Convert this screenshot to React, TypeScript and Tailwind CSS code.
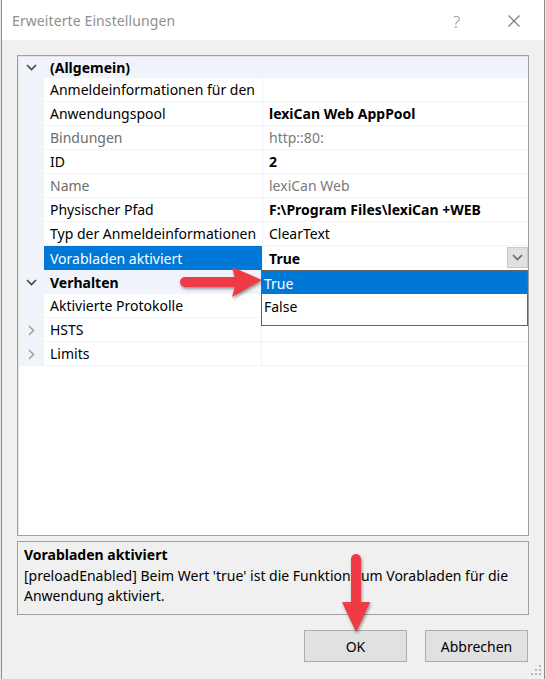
import React from 'react'

type Row =
  | { kind: 'cat'; label: string }
  | { kind: 'group'; label: string }
  | { kind: 'prop'; name: string; value: string; bold?: boolean; disabled?: boolean; selected?: boolean }

const rows: Row[] = [
  { kind: 'cat', label: '(Allgemein)' },
  { kind: 'prop', name: 'Anmeldeinformationen für den', value: '' },
  { kind: 'prop', name: 'Anwendungspool', value: 'lexiCan Web AppPool', bold: true },
  { kind: 'prop', name: 'Bindungen', value: 'http::80:', disabled: true },
  { kind: 'prop', name: 'ID', value: '2', bold: true },
  { kind: 'prop', name: 'Name', value: 'lexiCan Web', disabled: true },
  { kind: 'prop', name: 'Physischer Pfad', value: 'F:\\Program Files\\lexiCan +WEB', bold: true },
  { kind: 'prop', name: 'Typ der Anmeldeinformationen', value: 'ClearText' },
  { kind: 'prop', name: 'Vorabladen aktiviert', value: 'True', bold: true, selected: true },
  { kind: 'cat', label: 'Verhalten' },
  { kind: 'prop', name: 'Aktivierte Protokolle', value: '' },
  { kind: 'group', label: 'HSTS' },
  { kind: 'group', label: 'Limits' },
]

function ChevronDown({ color = '#555' }: { color?: string }) {
  return (
    <svg width="11" height="7" viewBox="0 0 11 7">
      <path d="M1 1 L5.5 5.5 L10 1" fill="none" stroke={color} strokeWidth="1.6" />
    </svg>
  )
}

function ChevronRight() {
  return (
    <svg width="7" height="11" viewBox="0 0 7 11">
      <path d="M1 1 L5.5 5.5 L1 10" fill="none" stroke="#9a9a9a" strokeWidth="1.4" />
    </svg>
  )
}

function GridRow({ row }: { row: Row }) {
  if (row.kind === 'cat') {
    return (
      <div className={`flex bg-[#f0f4fa] ${row.label === '(Allgemein)' ? 'h-[22px]' : 'h-[24px]'}`}>
        <div className="w-[26px] flex items-center justify-center">
          <ChevronDown color="#444" />
        </div>
        <div className="flex items-center pl-[6px] font-bold text-black">{row.label}</div>
      </div>
    )
  }
  if (row.kind === 'group') {
    return (
      <div className="flex h-[24px]">
        <div className="w-[26px] bg-[#f0f4fa] flex items-center justify-center">
          <ChevronRight />
        </div>
        <div className="w-[218px] flex items-center pl-[6px] border-r border-b border-[#f0f4fa] text-black">
          {row.label}
        </div>
        <div className="flex-1 border-b border-[#f0f4fa]" />
      </div>
    )
  }
  return (
    <div className="flex h-[24px]">
      <div className="w-[26px] bg-[#f0f4fa]" />
      <div
        className={`w-[218px] flex items-center pl-[6px] whitespace-nowrap overflow-hidden ${
          row.selected
            ? 'bg-[#0078d7] text-white'
            : `border-b border-[#f0f4fa] ${row.disabled ? 'text-[#6d6d6d]' : 'text-black'}`
        }`}
      >
        {row.name}
      </div>
      <div
        className={`flex-1 flex items-center pl-[6px] border-l border-[#f0f4fa] relative ${
          row.selected ? '' : 'border-b'
        } ${row.bold ? 'font-bold text-black' : row.disabled ? 'text-[#7a7a7a]' : 'text-black'}`}
      >
        {row.value}
        {row.selected && (
          <div className="absolute right-0 top-[1px] w-[21px] h-[21px] bg-[#e1e1e1] border border-[#c8c8c8] flex items-center justify-center">
            <ChevronDown color="#666" />
          </div>
        )}
      </div>
    </div>
  )
}

export default function App() {
  return (
    <div
      className="w-[546px] h-[679px] bg-[#e8e8e8] relative overflow-hidden text-[14px]"
      style={{ fontFamily: '"Noto Sans", "Liberation Sans", sans-serif' }}
    >
      <div className="absolute left-[1px] top-0 w-[544px] h-[679px] border-x border-[#8c8c8c] flex flex-col bg-[#f0f0f0]">
        {/* title bar */}
        <div className="h-[40px] bg-white flex items-center pl-[10px] relative shrink-0">
          <span className="text-[14px] text-[#8f8f8f] tracking-[0.1px]">Erweiterte Einstellungen</span>
          <span className="absolute left-[451px] top-[9px] text-[17px] text-[#8f8f8f] font-light">?</span>
          <svg className="absolute left-[506px] top-[15px]" width="12" height="12" viewBox="0 0 12 12">
            <path d="M0.5 0.5 L11.5 11.5 M11.5 0.5 L0.5 11.5" stroke="#7a7a7a" strokeWidth="1.1" />
          </svg>
        </div>

        <div className="flex-1 flex flex-col px-[15px] pt-[15px]">
          {/* property grid */}
          <div className="h-[481px] border border-[#a0a0a0] bg-white relative shrink-0">
            <div className="absolute inset-0 border-t border-l border-[#e3e3e3] pointer-events-none" />
            <div className="flex flex-col">
              {rows.map((r, i) => (
                <GridRow key={i} row={r} />
              ))}
            </div>

            {/* dropdown list */}
            <div className="absolute left-[243px] top-[214px] w-[267px] h-[56px] bg-white border border-[#646464]">
              <div className="h-[23px] bg-[#0078d7] text-white flex items-center pl-[2px] border-t border-dotted border-[#8a5a2a]">
                True
              </div>
              <div className="h-[24px] flex items-center pl-[2px] text-black">False</div>
            </div>
          </div>

          {/* description */}
          <div className="mt-[5px] h-[74px] border border-[#a0a0a0] bg-[#f0f0f0] px-[6px] pt-[2px] shrink-0">
            <div className="font-bold text-black leading-[22px]">Vorabladen aktiviert</div>
            <div className="text-black leading-[20px]">
              [preloadEnabled] Beim Wert 'true' ist die Funktion zum Vorabladen für die Anwendung aktiviert.
            </div>
          </div>

          {/* buttons */}
          <div className="mt-[15px] flex justify-end gap-[18px] pr-[1px]">
            <button className="w-[103px] h-[32px] bg-[#e1e1e1] border border-[#adadad] text-black">OK</button>
            <button className="w-[103px] h-[32px] bg-[#e1e1e1] border border-[#adadad] text-black">Abbrechen</button>
          </div>
        </div>

        {/* resize grip */}
        <svg className="absolute right-[3px] bottom-[4px]" width="11" height="11" viewBox="0 0 11 11">
          {[
            [9, 1],
            [9, 5],
            [5, 5],
            [9, 9],
            [5, 9],
            [1, 9],
          ].map(([x, y], i) => (
            <rect key={i} x={x} y={y} width="2" height="2" fill="#b8b8b8" />
          ))}
        </svg>
      </div>

      {/* red annotation arrows */}
      <svg
        className="absolute left-0 top-0 pointer-events-none drop-shadow-[1px_2px_1.5px_rgba(0,0,0,0.4)]"
        width="546"
        height="679"
        viewBox="0 0 546 679"
      >
        <line x1="185" y1="282" x2="238" y2="282" stroke="#ee3b45" strokeWidth="10" strokeLinecap="round" />
        <path d="M232 267 L262 280 L232 297 L236 282 Z" fill="#ee3b45" />
        <line x1="356" y1="559" x2="356" y2="608" stroke="#ee3b45" strokeWidth="10" strokeLinecap="round" />
        <path d="M342 602 L370 602 L356 632 L356 606 Z" fill="#ee3b45" />
        <path d="M342 602 L356 606 L370 602 L356 632 Z" fill="#ee3b45" />
      </svg>
    </div>
  )
}
